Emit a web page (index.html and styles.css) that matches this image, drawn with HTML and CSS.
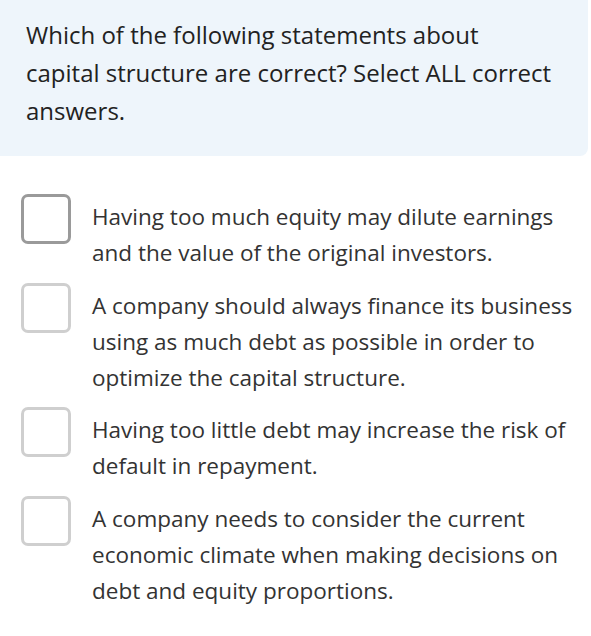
FILE: index.html
```html
<!DOCTYPE html>
<html>
<head>
<meta charset="utf-8">
<link rel="stylesheet" href="styles.css">
</head>
<body>
<div class="question">Which of the following statements about capital structure are correct? Select ALL correct answers.</div>
<div class="options">
  <div class="option"><span class="box box-active"></span><div class="label">Having too much equity may dilute earnings and the value of the original investors.</div></div>
  <div class="option"><span class="box"></span><div class="label">A company should always finance its business using as much debt as possible in order to optimize the capital structure.</div></div>
  <div class="option"><span class="box"></span><div class="label">Having too little debt may increase the risk of default in repayment.</div></div>
  <div class="option"><span class="box"></span><div class="label">A company needs to consider the current economic climate when making decisions on debt and equity proportions.</div></div>
</div>
</body>
</html>
```

FILE: styles.css
```css
html, body {
  margin: 0;
  padding: 0;
  background: #ffffff;
}
body {
  font-family: "Open Sans", "Noto Sans", sans-serif;
  color: #2b2b2b;
}
.question {
  width: 588px;
  box-sizing: border-box;
  background: #eef5fb;
  border-radius: 0 0 8px 0;
  padding: 16px 30px 26px 26px;
  font-size: 24px;
  line-height: 38px;
  color: #222;
}
.options {
  display: flex;
  flex-direction: column;
  gap: 11.5px;
  padding: 38px 10px 0 21px;
}
.option {
  display: flex;
  align-items: flex-start;
  gap: 21px;
}
.box {
  flex: none;
  width: 50px;
  height: 50px;
  box-sizing: border-box;
  border: 3px solid #cfcfcf;
  border-radius: 7px;
}
.box-active {
  border-color: #9a9a9a;
}
.label {
  margin-top: 5px;
  font-size: 22.5px;
  line-height: 36px;
  color: #333;
}
```
